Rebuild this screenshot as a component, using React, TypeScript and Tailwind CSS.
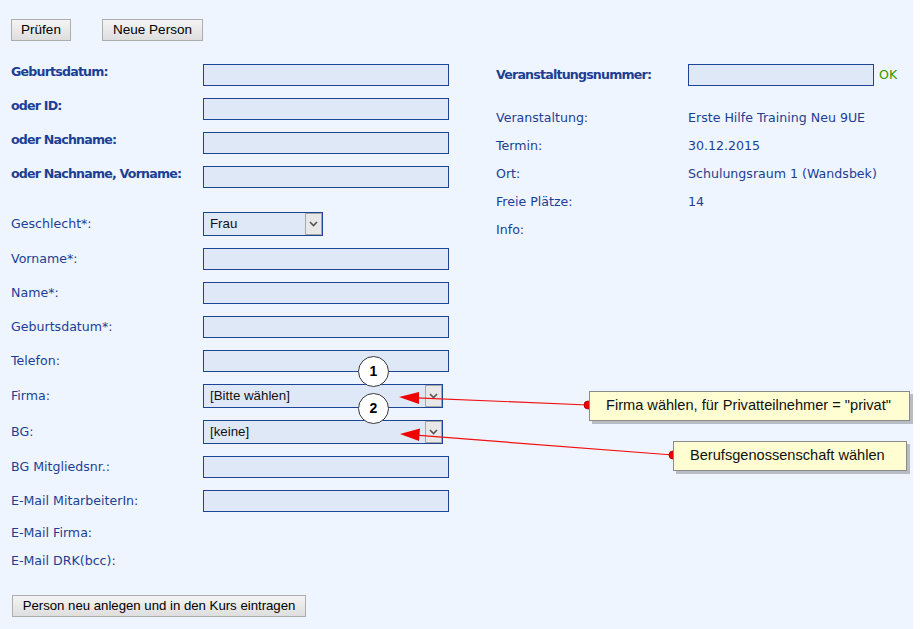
import React from "react";

const label = "text-[12.6px] leading-4 text-[#1c3f94] whitespace-nowrap";
const boldLabel = "font-bold tracking-[-0.8px]";
const inputCls = "h-[22px] w-[246px] border border-[#1c4595] bg-[#dfe8f7]";

function Btn({ children, w, size = "text-[13.5px]" }: { children: React.ReactNode; w: string; size?: string }) {
  return (
    <button
      className={`h-[22px] ${w} border border-[#adadad] bg-gradient-to-b from-[#f4f4f4] to-[#dedede] font-['Liberation_Sans'] ${size} leading-none text-black`}
    >
      {children}
    </button>
  );
}

function FakeSelect({ value, w }: { value: string; w: string }) {
  return (
    <div className={`flex h-[24px] ${w} items-stretch border border-[#1c4595] bg-[#dfe8f7]`}>
      <span className="flex-1 pl-[6px] font-['Liberation_Sans'] text-[13.3px] leading-[22px] text-[#111]">
        {value}
      </span>
      <span className="flex w-[17px] items-center justify-center border border-[#a7a7a7] bg-[#e8e8e8]">
        <svg width="9" height="6" viewBox="0 0 9 6">
          <path d="M1 1 L4.5 4.5 L8 1" fill="none" stroke="#555" strokeWidth="1.6" />
        </svg>
      </span>
    </div>
  );
}

function Row({ text, children, bold }: { text: string; children?: React.ReactNode; bold?: boolean }) {
  return (
    <div className={`flex ${bold ? "items-start" : "items-center"}`}>
      <span className={`${label} w-[192px] ${bold ? boldLabel : ""}`}>{text}</span>
      {children}
    </div>
  );
}

function InfoRow({ k, v }: { k: string; v?: string }) {
  return (
    <div className="flex h-4 items-center">
      <span className={`${label} w-[192px]`}>{k}</span>
      <span className={label}>{v}</span>
    </div>
  );
}

export default function App() {
  return (
    <div className="min-h-screen bg-white font-['DejaVu_Sans',sans-serif]">
      <div className="relative h-[629px] w-[913px] bg-[#eef5ff]">
        <div className="flex gap-[31px] pl-[11px] pt-[19px]">
          <Btn w="w-[60px]">Prüfen</Btn>
          <Btn w="w-[101px]">Neue Person</Btn>
        </div>

        <div className="mt-[23px] flex">
          {/* linke Spalte */}
          <div className="flex w-[485px] flex-col pl-[11px]">
            <div className="flex flex-col gap-3">
              <Row text="Geburtsdatum:" bold><div className={inputCls} /></Row>
              <Row text="oder ID:" bold><div className={inputCls} /></Row>
              <Row text="oder Nachname:" bold><div className={inputCls} /></Row>
              <Row text="oder Nachname, Vorname:" bold><div className={inputCls} /></Row>
            </div>
            <div className="mt-6 flex flex-col gap-3">
              <Row text="Geschlecht*:"><FakeSelect value="Frau" w="w-[120px]" /></Row>
              <Row text="Vorname*:"><div className={inputCls} /></Row>
              <Row text="Name*:"><div className={inputCls} /></Row>
              <Row text="Geburtsdatum*:"><div className={inputCls} /></Row>
              <Row text="Telefon:"><div className={inputCls} /></Row>
              <Row text="Firma:"><FakeSelect value="[Bitte wählen]" w="w-[240px]" /></Row>
              <Row text="BG:"><FakeSelect value="[keine]" w="w-[240px]" /></Row>
              <Row text="BG Mitgliedsnr.:"><div className={inputCls} /></Row>
              <Row text="E-Mail MitarbeiterIn:"><div className={inputCls} /></Row>
            </div>
            <div className="mt-2 flex flex-col gap-3">
              <div className="h-4"><span className={label}>E-Mail Firma:</span></div>
              <div className="h-4"><span className={label}>E-Mail DRK(bcc):</span></div>
            </div>
            <div className="mt-[29px] pl-px">
              <Btn w="w-[294px]" size="text-[13.2px]">Person neu anlegen und in den Kurs eintragen</Btn>
            </div>
          </div>

          {/* rechte Spalte */}
          <div className="flex flex-col pl-[11px]">
            <div className="flex items-center">
              <span className={`${label} ${boldLabel} w-[192px]`}>Veranstaltungsnummer:</span>
              <div className="h-[22px] w-[186px] border border-[#1c4595] bg-[#dfe8f7]" />
              <span className="ml-[5px] text-[12.6px] text-[#2f9a00]">OK</span>
            </div>
            <div className="mt-6 flex flex-col gap-3">
              <InfoRow k="Veranstaltung:" v="Erste Hilfe Training Neu 9UE" />
              <InfoRow k="Termin:" v="30.12.2015" />
              <InfoRow k="Ort:" v="Schulungsraum 1 (Wandsbek)" />
              <InfoRow k="Freie Plätze:" v="14" />
              <InfoRow k="Info:" />
            </div>
          </div>
        </div>

        {/* Anmerkungen */}
        <svg className="pointer-events-none absolute inset-0" width="913" height="629">
          <line x1="416" y1="397.8" x2="588" y2="405" stroke="#f01010" strokeWidth="1.2" />
          <polygon points="399,397 419,392 419,404" fill="#f00000" />
          <circle cx="588" cy="405" r="4" fill="#f00000" stroke="#a00000" strokeWidth="0.8" />
          <line x1="416" y1="435.2" x2="673" y2="455" stroke="#f01010" strokeWidth="1.2" />
          <polygon points="400,434 420,428.5 419,441" fill="#f00000" />
          <circle cx="673" cy="455" r="4" fill="#f00000" stroke="#a00000" strokeWidth="0.8" />
        </svg>

        <div className="absolute left-[358px] top-[356px] flex h-[31px] w-[31px] items-center justify-center rounded-full border-[1.5px] border-[#3a3a3a] bg-white font-['Liberation_Sans'] text-[14px] font-bold text-black">
          1
        </div>
        <div className="absolute left-[358px] top-[393px] flex h-[31px] w-[31px] items-center justify-center rounded-full border-[1.5px] border-[#3a3a3a] bg-white font-['Liberation_Sans'] text-[14px] font-bold text-black">
          2
        </div>

        <div className="absolute left-[589px] top-[391px] flex h-[30px] w-[321px] items-center border border-[#8a8a8a] bg-[#fffed2] pl-[16px] font-['Liberation_Sans'] text-[14.6px] text-[#111] shadow-[3px_3px_0_#b8bcc4]">
          Firma wählen, für Privatteilnehmer = "privat"
        </div>
        <div className="absolute left-[673px] top-[441px] flex h-[30px] w-[234px] items-center border border-[#8a8a8a] bg-[#fffed2] pl-[16px] font-['Liberation_Sans'] text-[14.6px] text-[#111] shadow-[3px_3px_0_#b8bcc4]">
          Berufsgenossenschaft wählen
        </div>
      </div>
    </div>
  );
}
